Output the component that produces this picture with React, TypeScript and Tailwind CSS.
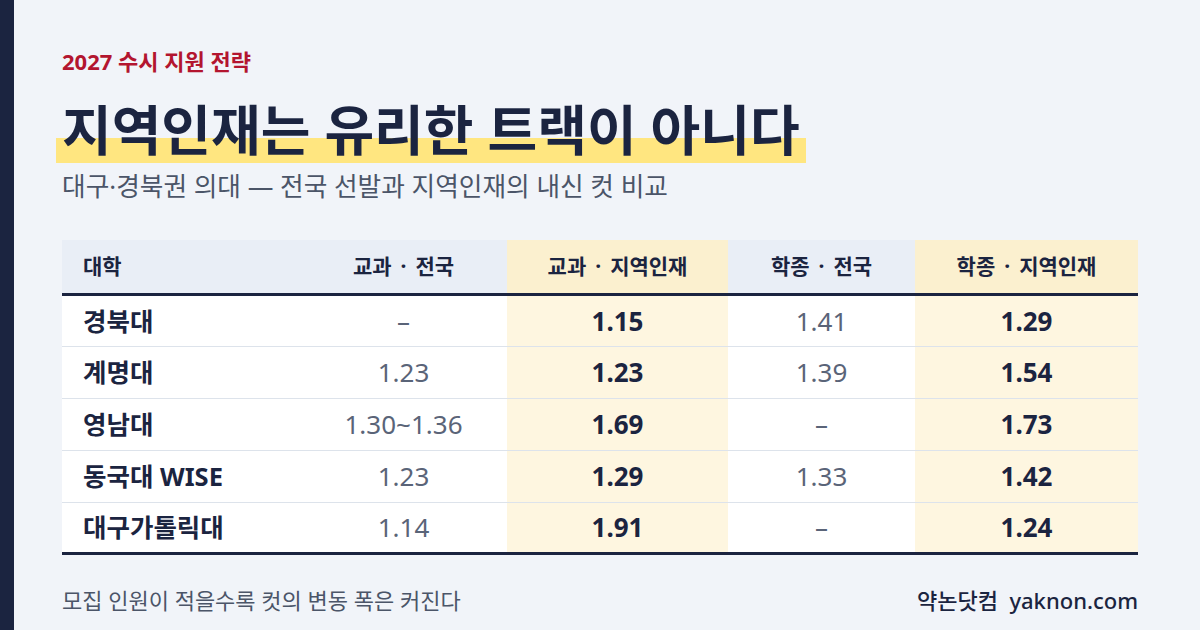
const font = 'font-["Noto_Sans","Noto_Sans_CJK_KR",sans-serif]';

type Row = { name: string; a: string; b: string; c: string; d: string };

const rows: Row[] = [
  { name: '경북대', a: '–', b: '1.15', c: '1.41', d: '1.29' },
  { name: '계명대', a: '1.23', b: '1.23', c: '1.39', d: '1.54' },
  { name: '영남대', a: '1.30~1.36', b: '1.69', c: '–', d: '1.73' },
  { name: '동국대 WISE', a: '1.23', b: '1.29', c: '1.33', d: '1.42' },
  { name: '대구가톨릭대', a: '1.14', b: '1.91', c: '–', d: '1.24' },
];

const cols = 'grid grid-cols-[238px_207px_221px_187px_223px]';

function Head({ a, b }: { a: string; b: string }) {
  return (
    <>
      {a}
      <span className="px-[9px]">·</span>
      {b}
    </>
  );
}

export default function App() {
  return (
    <div className={`w-[1200px] h-[630px] flex bg-[#f1f4f9] overflow-hidden ${font}`}>
      {/* left accent bar */}
      <div className="w-[14px] h-full bg-[#1b2440] shrink-0" />

      <div className="flex-1 flex flex-col pl-[48px] pr-[48px]">
        {/* Header */}
        <div className="pt-[47px] text-[22px] font-bold leading-[28px] text-[#b3152f]">2027 수시 지원 전략</div>

        <h1 className="mt-[22px] text-[54px] font-bold leading-[66px] text-[#1b2440]">
          <span className="inline-block -ml-[6px] px-[6px] bg-[linear-gradient(transparent_62%,#ffe680_62%)]">
            지역인재는 유리한 트랙이 아니다
          </span>
        </h1>

        <p className="mt-[7px] text-[25.7px] leading-[34px] text-[#4b5568]">
          대구·경북권 의대 — 전국 선발과 지역인재의 내신 컷 비교
        </p>

        {/* Table */}
        <div className="mt-[36px] w-[1076px]">
          <div className={`${cols} h-[56px] border-b-[3px] border-[#1b2440] text-[21px] font-bold text-[#1b2440]`}>
            <div className="flex items-center pl-[21px] bg-[#e9eef6]">대학</div>
            <div className="flex items-center justify-center bg-[#e9eef6]"><Head a="교과" b="전국" /></div>
            <div className="flex items-center justify-center bg-[#fbf0cf]"><Head a="교과" b="지역인재" /></div>
            <div className="flex items-center justify-center bg-[#e9eef6]"><Head a="학종" b="전국" /></div>
            <div className="flex items-center justify-center bg-[#fbf0cf]"><Head a="학종" b="지역인재" /></div>
          </div>

          {rows.map((r, i) => (
            <div
              key={r.name}
              className={`${cols} ${i === 0 ? 'h-[51px]' : 'h-[52px]'} text-[26px] ${i < rows.length - 1 ? 'border-b border-[#dde3eb]' : 'border-b-[3px] border-[#1b2440]'}`}
            >
              <div className="flex items-center pl-[21px] bg-white text-[25.5px] font-bold text-[#1b2440]">{r.name}</div>
              <div className="flex items-center justify-center bg-white text-[#5a6478]">{r.a}</div>
              <div className="flex items-center justify-center bg-[#fef6e0] font-bold text-[#1b2440]">{r.b}</div>
              <div className="flex items-center justify-center bg-white text-[#5a6478]">{r.c}</div>
              <div className="flex items-center justify-center bg-[#fef6e0] font-bold text-[#1b2440]">{r.d}</div>
            </div>
          ))}
        </div>

        {/* Footer */}
        <div className="mt-[30px] h-[30px] w-[1076px] flex items-center justify-between">
          <span className="text-[22px] text-[#4b5568]">모집 인원이 적을수록 컷의 변동 폭은 커진다</span>
          <span className="text-[22px] font-medium text-[#1b2440] whitespace-pre">약논닷컴  yaknon.com</span>
        </div>
      </div>
    </div>
  );
}
